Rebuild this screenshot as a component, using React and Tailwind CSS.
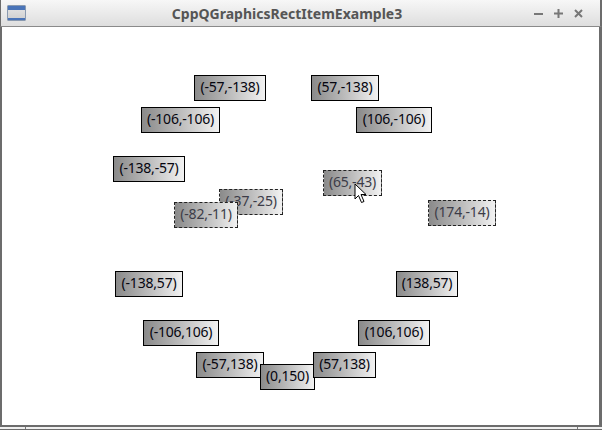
const items = [
  { t: '(-57,-138)', c: 'left-[192px] top-[48px] w-[72px]' },
  { t: '(57,-138)', c: 'left-[309px] top-[48px] w-[68px]' },
  { t: '(-106,-106)', c: 'left-[139px] top-[80px] w-[79px]' },
  { t: '(106,-106)', c: 'left-[354px] top-[80px] w-[76px]' },
  { t: '(-138,-57)', c: 'left-[111px] top-[129px] w-[72px]' },
  { t: '(-138,57)', c: 'left-[113px] top-[244px] w-[68px]' },
  { t: '(138,57)', c: 'left-[394px] top-[244px] w-[62px]' },
  { t: '(-106,106)', c: 'left-[141px] top-[293px] w-[76px]' },
  { t: '(106,106)', c: 'left-[356px] top-[293px] w-[72px]' },
  { t: '(-57,138)', c: 'left-[194px] top-[325px] w-[68px]' },
  { t: '(0,150)', c: 'left-[258px] top-[337px] w-[55px]' },
  { t: '(57,138)', c: 'left-[311px] top-[325px] w-[63px]' },
  { t: '(-37,-25)', c: 'left-[217px] top-[162px] w-[64px]', sel: true },
  { t: '(-82,-11)', c: 'left-[172px] top-[175px] w-[64px]', sel: true },
  { t: '(65,-43)', c: 'left-[321px] top-[143px] w-[59px]', sel: true },
  { t: '(174,-14)', c: 'left-[426px] top-[173px] w-[68px]', sel: true },
]

function Item({ t, c, sel }) {
  return (
    <div
      className={
        'absolute h-[26px] pb-[3px] flex items-center justify-center whitespace-nowrap tracking-[-0.2px] bg-gradient-to-r from-[#8a8a8a] to-[#f2f2f2] text-[14px] ' +
        c +
        (sel ? ' border border-dashed border-[#222] text-[#3c3c48]' : ' border border-black text-[#05050f]')
      }
    >
      {t}
    </div>
  )
}

export default function App() {
  return (
    <div className="w-[602px] h-[430px] flex flex-col bg-white overflow-hidden" style={{ fontFamily: '"Noto Sans", "Open Sans", sans-serif' }}>
      <div className="h-[27px] shrink-0 flex items-center border-b border-[#8a8a8a] bg-gradient-to-b from-[#f7f7f7] to-[#dedede] border-l border-l-[#6c6c6c] border-r-2 border-r-[#6c6c6c]">
        <div className="ml-[6px] w-[19px] h-[16px] rounded-[1px] border border-[#8a9ab0] bg-gradient-to-b from-[#e6e6e6] to-[#cfcfcf] flex flex-col">
          <div className="h-[4px] bg-[#4a74b8]" />
          <div className="flex-1" />
          <div className="h-[2px] bg-[#4a74b8]" />
        </div>
        <div className="flex-1 text-center text-[14px] font-bold text-[#555] pl-[14px]">CppQGraphicsRectItemExample3</div>
        <div className="flex items-center gap-[11px] mr-[17px] text-[#777]">
          <svg width="9" height="9" viewBox="0 0 9 9"><rect x="0" y="4" width="9" height="2" fill="#777" /></svg>
          <svg width="9" height="9" viewBox="0 0 9 9"><rect x="0" y="3.5" width="9" height="2" fill="#777" /><rect x="3.5" y="0" width="2" height="9" fill="#777" /></svg>
          <svg width="9" height="9" viewBox="0 0 9 9"><path d="M1 1 L8 8 M8 1 L1 8" stroke="#777" strokeWidth="2" /></svg>
        </div>
      </div>
      <div className="relative flex-1 border-l-2 border-l-[#6c6c6c] border-r-[3px] border-r-[#6c6c6c]">
        {items.map((it) => (
          <Item key={it.t} {...it} />
        ))}
        <svg className="absolute left-[352px] top-[156px]" width="14" height="21" viewBox="0 0 14 21">
          <path d="M1 1 L1 16 L4.5 12.5 L7.5 19.5 L10 18.5 L7 11.5 L12 11.5 Z" fill="white" stroke="black" strokeWidth="1" strokeLinejoin="round" />
        </svg>
      </div>
      <div className="h-[5px] shrink-0 flex flex-col">
        <div className="h-[2px] bg-[#6c6c6c]" />
        <div className="h-[2px] bg-[#f0f0f0] flex">
          <div className="w-[26px] border-r border-[#777]" />
          <div className="flex-1" />
          <div className="w-[25px] border-l border-[#777]" />
        </div>
        <div className="h-[1px] bg-[#6c6c6c]" />
      </div>
    </div>
  )
}
